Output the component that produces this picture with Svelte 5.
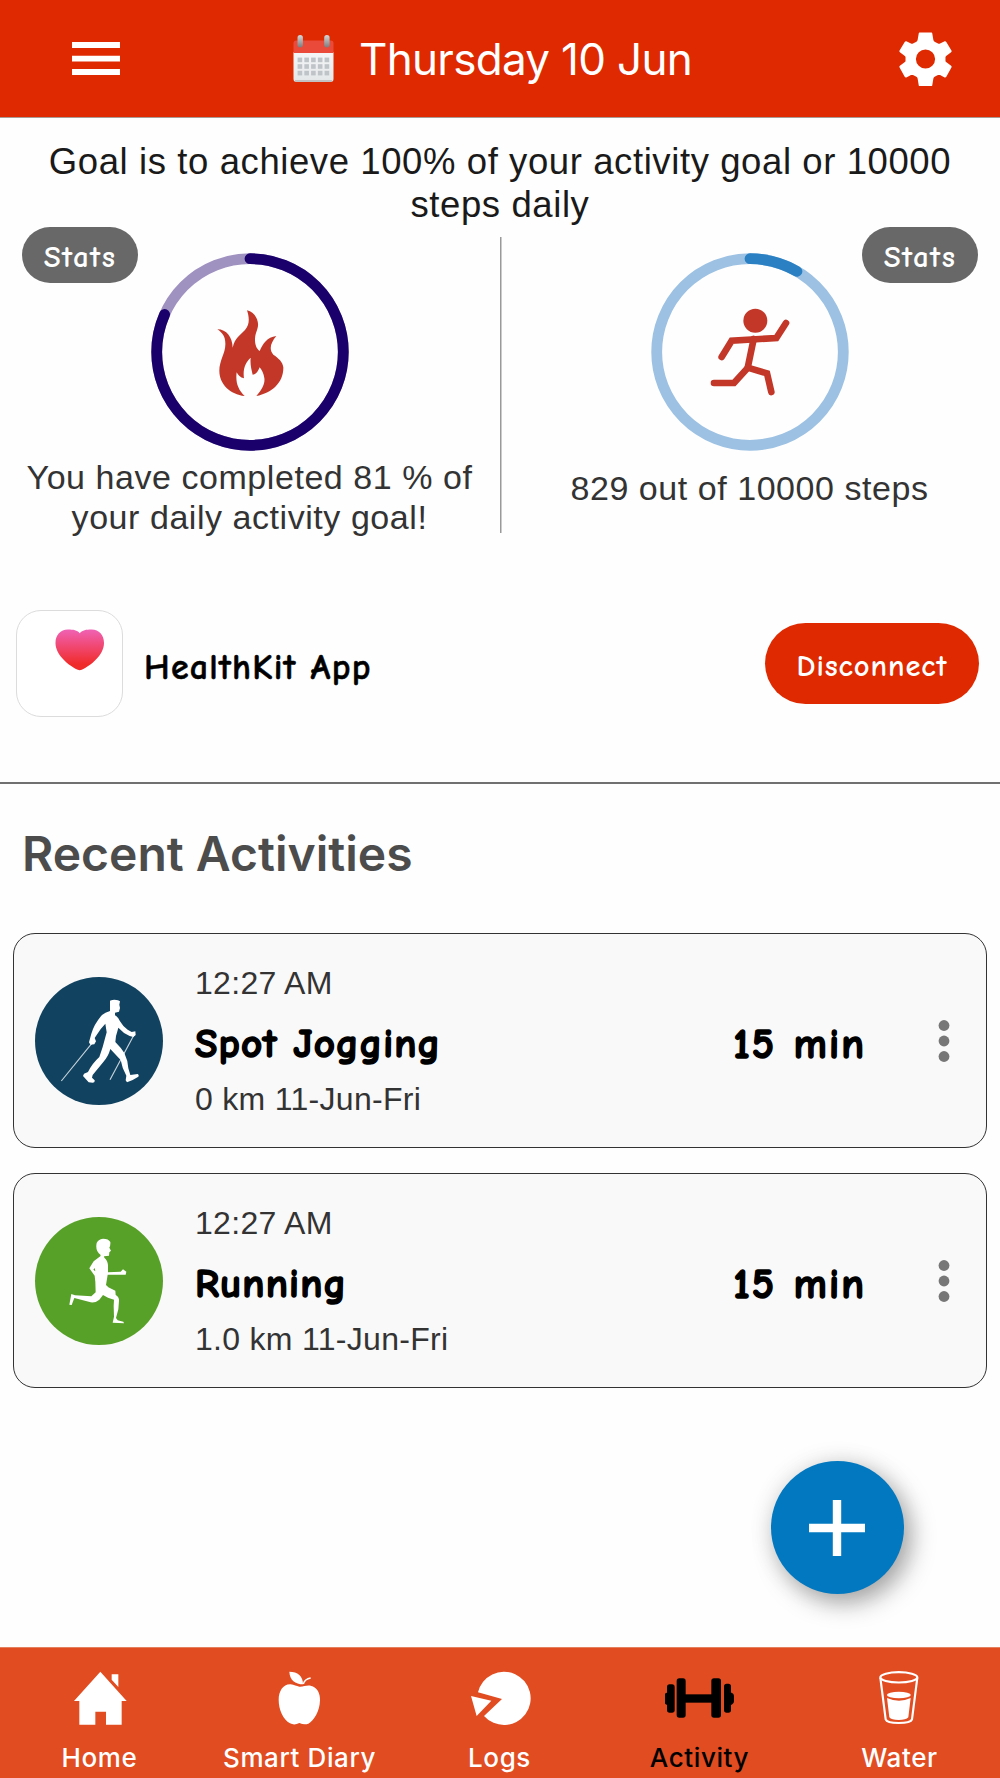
<script>
  const goals = [
    { id: 'activity', percent: 81.6, track: '#9f91c0', bar: '#1a006b', lines: ['You have completed 81 % of', 'your daily activity goal!'] },
    { id: 'steps', percent: 8.4, track: '#9cc1e3', bar: '#2a80c3', lines: ['829 out of 10000 steps'] }
  ];

  const activities = [
    { kind: 'walk', time: '12:27 AM', name: 'Spot Jogging', detail: '0 km 11-Jun-Fri', duration: '15 min' },
    { kind: 'run', time: '12:27 AM', name: 'Running', detail: '1.0 km 11-Jun-Fri', duration: '15 min' }
  ];

  const tabs = ['Home', 'Smart Diary', 'Logs', 'Activity', 'Water'];
  const dotColumns = [0, 1, 2, 3, 4];
  const dotRows = [0, 1, 2];
</script>

<div class="app">
  <header class="topbar">
    <svg class="menu" viewBox="0 0 48 33">
      <path d="M0 3h48M0 16.7h48M0 30h48" stroke="#fff" stroke-width="5.8" />
    </svg>
    <div class="date">
      <svg class="calendar" viewBox="0 0 41 48">
        <defs>
          <linearGradient id="page" x1="0" y1="0" x2="0" y2="1">
            <stop offset="0" stop-color="#f4f6f7" /><stop offset="1" stop-color="#e4e7e8" />
          </linearGradient>
          <linearGradient id="ring" x1="0" y1="0" x2="0" y2="1">
            <stop offset="0" stop-color="#d5d8da" /><stop offset="1" stop-color="#7d7a7c" />
          </linearGradient>
        </defs>
        <path d="M.5 17h40v27a3 3 0 0 1-3 3h-34a3 3 0 0 1-3-3z" fill="url(#page)" />
        <path d="M2 46h37" stroke="#b9b5b4" stroke-width="1.6" />
        <path d="M.5 18V8a2.5 2.5 0 0 1 2.500-2.500h35a2.500 2.500 0 0 1 2.500 2.500v10z" fill="#e94a3a" />
        <g fill="#bfc4c9">
          {#each dotRows as r}
            {#each dotColumns as c}
              <rect x={4.6 + c * 6.75} y={22.6 + r * 6.6} width="4.600" height="4.600" />
            {/each}
          {/each}
        </g>
        <rect x="4.500" y="0" width="5.400" height="12.500" rx="2.700" fill="url(#ring)" />
        <rect x="31.200" y="0" width="5.400" height="12.500" rx="2.700" fill="url(#ring)" />
      </svg>
      <h1>Thursday 10 Jun</h1>
    </div>
    <svg class="gear" viewBox="1196 95 160 162">
      <path
        fill="#fff"
        fill-rule="evenodd"
        d="M1258 96h36q2 0 2.300 2l3.500 21q1 4 5 6l9 4.500q3 1 6 0l14-7q3-1 5 2l15.500 26q1.500 3-1 5l-14 10.500q-3 2-3 5v10q0 3 3 5l14 10.500q2.500 2 1 5l-15.500 28q-2 3-5 2l-14-7q-3-1-6 0l-9 4.500q-4 2-5 6l-3.500 21q-.3 2-2.300 2h-36q-2 0-2.300-2l-3.500-21q-1-4-5-6l-9-4.500q-3-1-6 0l-14 7q-3 1-5-2l-15.500-28q-1.500-3 1-5l14-10.500q3-2 3-5v-10q0-3-3-5l-14-10.500q-2.500-2-1-5l15.500-26q2-3 5-2l14 7q3 1 6 0l9-4.500q4-2 5-6l3.500-21q.3-2 2.300-2zM1276 147a29 29 0 1 0 0 58a29 29 0 1 0 0-58z"
      />
    </svg>
  </header>

  <p class="intro">Goal is to achieve 100% of your activity goal or 10000<br />steps daily</p>

  <section class="goals">
    {#each goals as goal}
      <div class="goal {goal.id}">
        <span class="stats hand">Stats</span>
        <svg class="progress" viewBox="0 0 198 198">
          <circle cx="99" cy="99" r="93.300" fill="none" stroke={goal.track} stroke-width="10.800" />
          <circle cx="99" cy="99" r="93.300" fill="none" stroke={goal.bar} stroke-width="10.800" stroke-linecap="round"
            pathLength="100" stroke-dasharray="{goal.percent} 100" transform="rotate(-90 99 99)" />
          {#if goal.id === 'activity'}
            <g transform="scale(.33333) translate(-452 -114)">
              <path fill="#c23728" d="M740 286C763 292 775 313 773 333C770 350 764 355 764 377C765 393 770 402 778 408C788 386 800 366 828 363C811 383 805 403 819 419C835 430 847 440 849 457C850 502 815 534 768 543C789 521 794 502 792 489C790 476 785 466 778 457C773 470 766 479 757 479C753 462 749 447 751 428C735 442 727 463 731 490C720 488 713 481 709 472C705 501 713 524 733 543C690 538 657 508 657 467C657 437 675 414 675 389C676 366 667 354 651 343C679 343 696 367 697 398C704 367 720 361 734 345C750 328 746 304 740 286Z" />
            </g>
          {:else}
            <g transform="scale(.33333) translate(-455 -114)" fill="none" stroke="#c23728" stroke-width="20">
              <circle cx="768" cy="317.500" r="36" fill="#c23728" stroke="none" />
              <path d="M667 426L697 377L831 369L860 324" stroke-linecap="round" />
              <path d="M763 372L745 459L704 504H644" stroke-linecap="round" />
              <path d="M745 458L803 475L816 531" stroke-linecap="round" />
            </g>
          {/if}
        </svg>
        <p class="caption">{#each goal.lines as line}<span>{line}</span>{/each}</p>
      </div>
    {/each}
  </section>

  <section class="health">
    <div class="tile">
      <svg class="heart" viewBox="0 0 50 42">
        <defs>
          <linearGradient id="pulse" x1="0" y1="0" x2="0" y2="1">
            <stop offset="0" stop-color="#f062b4" /><stop offset=".85" stop-color="#f02c2b" />
          </linearGradient>
        </defs>
        <path fill="url(#pulse)" d="M25 4C28 1 31 .4 37 .4C44.500.4 49.500 6 49.500 14C49.500 26 36 37 27 41Q25 42 23 41C14 37 .5 26 .5 14C.5 6 5.500.4 13 .4C19 .4 22 1 25 4Z" />
      </svg>
    </div>
    <span class="source hand">HealthKit App</span>
    <button class="disconnect hand">Disconnect</button>
  </section>

  <h2>Recent Activities</h2>

  <section class="list">
    {#each activities as item}
      <article class="card">
        <svg class="avatar" viewBox="105 170 384 384">
          {#if item.kind === 'walk'}
            <circle cx="297" cy="362" r="192" fill="#11425f" />
            <path d="M278 366L184 482M403 342L330 478" stroke="#c4d1da" stroke-width="3.500" fill="none" />
            <path fill="#fff" d="M330 241Q342 236 354 240L360 243L358 253L360 263L357 274L345 277L345 285Q356 291 360 303Q369 319 383 328L395 335L406 333L407 344L400 350L389 347Q370 339 355 322Q351 337 348 347L346 365Q363 382 373 398Q384 421 385 444L391 464L413 461Q418 464 415 469L398 479L381 486L377 480L379 466Q366 443 362 419L331 386Q325 408 310 425L278 464L276 472L284 480Q285 487 278 487L266 486L249 467L252 460L264 455Q276 430 298 410L308 380L320 336L316 310Q302 324 290 344L284 353L288 363L283 372L271 373L267 366L274 340Q283 310 306 284Q315 276 330 272Z" />
          {:else}
            <circle cx="297" cy="362" r="192" fill="#58a129" />
            <path fill="#fff" fill-rule="evenodd" d="M290 248Q294 237 309 235Q326 235 331 245Q332 255 328 262L333 271L328 276L327 286L312 288L313 292Q323 300 324 315L324 336L362 334L369 327L379 334L377 343L363 343L323 343L318 374L325 381L346 391L347 404Q358 411 357 421L355 447L348 473L353 480L370 484L372 489L338 487L342 469L341 437L342 418L324 412L309 404L298 418Q287 428 272 426L223 413L215 434L208 433L214 401L225 405L274 408L287 396L286 364L284 346L268 324L281 303L301 288L302 284Q285 272 290 248ZM284 323L280 328L286 333Z" />
          {/if}
        </svg>
        <div class="info">
          <span class="meta">{item.time}</span>
          <span class="name hand {item.kind}">{item.name}</span>
          <span class="meta">{item.detail}</span>
        </div>
        <span class="duration hand">{item.duration}</span>
        <svg class="more" viewBox="0 0 12 44" fill="#777">
          <circle cx="6" cy="6.500" r="5.400" /><circle cx="6" cy="22" r="5.400" /><circle cx="6" cy="37.500" r="5.400" />
        </svg>
      </article>
    {/each}
  </section>

  <button class="add" aria-label="Add activity">
    <svg viewBox="0 0 56 56"><path d="M28 0v56M0 28h56" stroke="#fff" stroke-width="8.400" /></svg>
  </button>

  <nav class="tabs">
    {#each tabs as tab}
      <div class="tab" class:active={tab === 'Activity'}>
        {#if tab === 'Home'}
          <svg class="icon" viewBox="195 94 210 174" fill="currentColor">
            <path d="M301 102L380 190H365V261H318V222H286V261H238V190H222ZM335 110H355V148L335 126Z" />
          </svg>
        {:else if tab === 'Smart Diary'}
          <svg class="icon" viewBox="795 94 210 174" fill="currentColor">
            <path d="M868 102C893 102 909 115 909 140C886 139 869 128 868 102Z" />
            <path d="M910 139Q914 124 932 121" fill="none" stroke="currentColor" stroke-width="4" />
            <path d="M898 147C910 148 918 142 932 144C952 148 961 168 960 188C959 222 942 249 925 258Q913 263 898 256Q883 264 870 257C850 246 836 216 836 186C836 161 849 139 872 140C883 141 889 146 898 147Z" />
          </svg>
        {:else if tab === 'Logs'}
          <svg class="icon" viewBox="1396 94 210 174" fill="currentColor">
            <path d="M1435 164A80 80 0 1 1 1453 235L1507 184Z" />
            <path d="M1414 175L1475 189L1431 235Z" />
          </svg>
        {:else if tab === 'Activity'}
          <svg class="icon" viewBox="495 94 210 174" fill="currentColor">
            <rect x="530" y="122" width="27" height="118" rx="8" /><rect x="634" y="122" width="29" height="118" rx="8" />
            <rect x="550" y="170" width="90" height="25" />
            <rect x="501" y="140" width="23" height="85" rx="8" /><rect x="672" y="138" width="21" height="87" rx="8" />
            <path d="M505 165h-5q-7 2-7 10v16q0 8 7 10h5zM689 165h6q7 2 7 10v16q0 8-7 10h-6z" />
          </svg>
        {:else}
          <svg class="icon" viewBox="1096 94 210 174" fill="none" stroke="currentColor" stroke-width="6.500">
            <ellipse cx="1197.500" cy="119" rx="55.500" ry="15.500" />
            <path d="M1142 120L1158 245Q1162 256 1197 256Q1233 256 1237 245L1253 120" />
            <ellipse cx="1197.500" cy="172" rx="36" ry="10" fill="currentColor" stroke="none" />
            <path stroke="none" fill="currentColor" d="M1162 181Q1180 189 1198 189Q1216 189 1233 181L1226 239Q1219 247 1197 247Q1175 247 1169 239Z" />
          </svg>
        {/if}
        <span>{tab}</span>
      </div>
    {/each}
  </nav>
</div>

<style>
  :global(body) { background: #fefefe; }
  * { box-sizing: border-box; }
  svg { display: block; flex: none; }
  p, h1, h2 { margin: 0; }
  button { border: 0; padding: 0; }

  .app {
    width: 1000px;
    height: 1778px;
    display: flex;
    flex-direction: column;
    overflow: hidden;
    background: #fefefe;
    font-family: "Liberation Sans", Arial, sans-serif;
    color: #333;
  }
  .hand {
    font-family: "Comic Neue", Chalkboard, Inter, sans-serif;
    font-weight: 700;
    white-space: nowrap;
  }

  .topbar {
    height: 118px;
    flex: none;
    display: flex;
    align-items: center;
    justify-content: space-between;
    padding: 0 48px 0 72px;
    background: #df2900;
    border-bottom: 1px solid #a89a95;
  }
  .menu { width: 48px; height: 33px; }
  .date { display: flex; align-items: center; gap: 25px; margin-right: 34px; }
  .calendar { width: 41px; height: 48px; }
  h1 { font: 400 44px/60px Inter, sans-serif; letter-spacing: -0.7px; color: #fff; white-space: nowrap; }
  .gear { width: 53px; height: 54px; }

  .intro { padding-top: 22px; font-size: 36.500px; line-height: 43px; letter-spacing: 0.59px; text-align: center; color: #1a1a1a; white-space: nowrap; }

  .goals { height: 307px; display: grid; grid-template-columns: 499px 501px; }
  .goal { display: grid; grid-template-columns: 1fr; grid-template-rows: 225px auto; align-content: start; justify-items: center; }
  .steps { background: linear-gradient(#999, #999) 1px 11px / 1.500px 296px no-repeat; }
  .stats {
    grid-area: 1 / 1;
    justify-self: start;
    width: 116px;
    height: 56px;
    margin: 1px 22px 0;
    border-radius: 28px;
    background: #686868;
    color: #fff;
    font-size: 31px;
    line-height: 61px;
    letter-spacing: 1.400px;
    text-align: center;
  }
  .steps .stats { justify-self: end; }
  .progress { grid-area: 1 / 1; width: 198px; height: 198px; margin-top: 27px; }
  .steps .progress { margin-left: 1px; }
  .caption { display: flex; flex-direction: column; align-items: center; font-size: 34px; line-height: 40px; letter-spacing: 0.550px; padding-top: 6px; white-space: nowrap; }
  .steps .caption { padding-top: 17px; }

  .health { height: 251px; display: flex; align-items: flex-start; padding: 77px 21px 0 16px; border-bottom: 2px solid #707070; }
  .tile { width: 107px; height: 107px; border: 1px solid #dcdcdc; border-radius: 25px; padding: 18px 0 0 38px; background: #fff; }
  .heart { width: 49.500px; height: 42px; }
  .source { margin: 30px 0 0 21px; font-size: 36px; line-height: 56px; letter-spacing: 1.200px; -webkit-text-stroke: 0.500px #000; color: #000; }
  .disconnect { width: 214px; height: 81px; margin: 13px 0 0 auto; border-radius: 41px; background: #df2900; color: #fff; font-size: 30.500px; letter-spacing: 0.900px; line-height: 88px; }

  h2 { padding: 40px 0 0 22px; font: 600 48px/60px Inter, sans-serif; color: #4c4c4c; height: 149px; white-space: nowrap; }

  .list { display: flex; flex-direction: column; gap: 25px; padding: 0 13px; }
  .card { height: 215px; display: flex; align-items: center; padding: 0 34px 0 21px; border: 1.500px solid #333; border-radius: 22px; background: #f9f9f9; }
  .avatar { width: 128px; height: 128px; }
  .info { margin-left: 32px; display: flex; flex-direction: column; }
  .meta { font-size: 32px; line-height: 40px; letter-spacing: 0.3px; white-space: nowrap; }
  .name { font-size: 41px; line-height: 66px; padding: 8px 0 2px; letter-spacing: 1.1px; -webkit-text-stroke: 1.500px #000; color: #000; }
  .duration { margin: 7px 72px 0 auto; font-size: 42px; letter-spacing: 2px; word-spacing: 0.500px; -webkit-text-stroke: 1.500px #000; color: #000; }
  .more { width: 12px; height: 44px; margin-right: 2px; }

  .add {
    width: 133px;
    height: 133px;
    margin: 73px 96.500px 0 auto;
    display: grid;
    place-items: center;
    flex: none;
    border-radius: 50%;
    background: #0278c0;
    box-shadow: 7px 9px 24px rgba(0, 0, 0, 0.34), 0 0 26px rgba(0, 0, 0, 0.08);
  }
  .add svg { width: 56px; height: 56px; }

  .tabs { height: 131px; margin-top: auto; flex: none; display: grid; grid-template-columns: repeat(5, 1fr); background: #e14c21; border-top: 1px solid #e5805f; }
  .tab { display: flex; flex-direction: column; align-items: center; padding: 21px 1px 0 0; color: #fff; font: 500 26px/36px Inter, sans-serif; letter-spacing: 0.6px; white-space: nowrap; }
  .tab span { margin-top: 13px; }
  .icon { width: 70px; height: 58px; }
  .active { color: #000; }
</style>
